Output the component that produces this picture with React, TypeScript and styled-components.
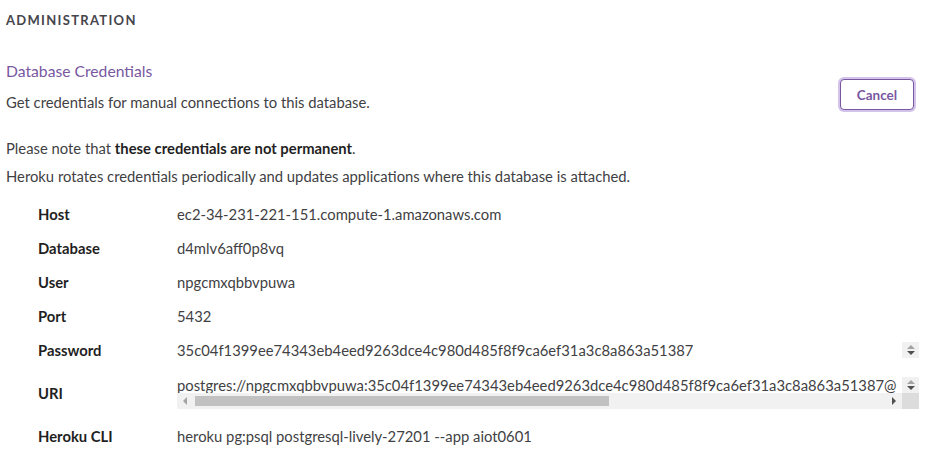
import React from 'react'
import styled, { createGlobalStyle } from 'styled-components'

const GlobalStyle = createGlobalStyle`
  body {
    margin: 0;
    background: #ffffff;
    font-family: 'Lato', 'Open Sans', sans-serif;
    color: #3f3f44;
  }
`

const Page = styled.div`
  padding: 10px 14px 0 6px;
`

const SectionLabel = styled.h2`
  margin: 0;
  font-size: 13px;
  line-height: 20px;
  font-weight: 700;
  letter-spacing: 1.3px;
  color: #45454b;
  text-transform: uppercase;
`

const Header = styled.div`
  display: flex;
  align-items: flex-start;
  justify-content: space-between;
  margin-top: 31px;
`

const Title = styled.h3`
  margin: 0;
  font-size: 15.7px;
  line-height: 20px;
  font-weight: 400;
  color: #79589f;
`

const Text = styled.p<{ $gap?: number }>`
  margin: ${p => p.$gap ?? 0}px 0 0;
  font-size: 14.8px;
  line-height: 20px;
  color: #3f3f44;

  b {
    font-weight: 700;
    color: #1f1f23;
  }
`

const CancelButton = styled.button`
  margin: 18px 5px 0 0;
  width: 74px;
  height: 31px;
  border: 1px solid #79589f;
  border-radius: 4px;
  background: #fff;
  box-shadow: 0 0 0 2px #d2c3ea;
  color: #79589f;
  font-family: inherit;
  font-size: 13.5px;
  font-weight: 700;
  cursor: pointer;
`

const Table = styled.div`
  margin: 11px 0 0 32px;
  display: flex;
  flex-direction: column;
`

const Row = styled.div<{ $pad?: number }>`
  display: grid;
  grid-template-columns: 139px 1fr;
  align-items: center;
  padding: ${p => p.$pad ?? 9}px 0;
  font-size: 14.8px;
  line-height: 16px;
`

const Label = styled.div`
  font-weight: 700;
  color: #1f1f23;
`

const Value = styled.div`
  color: #3f3f44;
  white-space: nowrap;
`

const ScrollBox = styled.div`
  display: grid;
  grid-template-columns: 1fr 17px;
  min-width: 0;
`

const ScrollText = styled.div`
  height: 16px;
  overflow: hidden;
  white-space: nowrap;
  color: #3f3f44;
`

const VBar = styled.div`
  height: 16px;
  background: #f1f1f1;
  display: flex;
  flex-direction: column;
  align-items: center;
  justify-content: center;
  gap: 2px;
`

const Arrow = styled.span<{ $dir: 'up' | 'down' | 'left' | 'right' }>`
  width: 0;
  height: 0;
  border: 4px solid transparent;
  ${p => p.$dir === 'up' && 'border-bottom-color: #a3a3a3; border-top-width: 0;'}
  ${p => p.$dir === 'down' && 'border-top-color: #505050; border-bottom-width: 0;'}
  ${p => p.$dir === 'left' && 'border-right-color: #a3a3a3; border-width: 4px 4px 4px 0;'}
  ${p => p.$dir === 'right' && 'border-left-color: #505050; border-width: 4px 0 4px 4px;'}
`

const HBar = styled.div`
  height: 16px;
  background: #f1f1f1;
  display: flex;
  align-items: center;
  padding: 0 6px;
  gap: 8px;
`

const Thumb = styled.div`
  height: 10px;
  background: #c1c1c1;
`

const Spacer = styled.span`
  flex: 1;
`

const Corner = styled.div`
  height: 16px;
  background: #dcdcdc;
`

const password = '35c04f1399ee74343eb4eed9263dce4c980d485f8f9ca6ef31a3c8a863a51387'

const rows = [
    ['Host', 'ec2-34-231-221-151.compute-1.amazonaws.com'],
    ['Database', 'd4mlv6aff0p8vq'],
    ['User', 'npgcmxqbbvpuwa'],
    ['Port', '5432'],
]

const App = () => {
    return <Page>
        <GlobalStyle />
        <SectionLabel>Administration</SectionLabel>

        <Header>
            <div>
                <Title>Database Credentials</Title>
                <Text $gap={11}>Get credentials for manual connections to this database.</Text>
            </div>
            <CancelButton>Cancel</CancelButton>
        </Header>

        <Text $gap={26}>Please note that <b>these credentials are not permanent</b>.</Text>
        <Text $gap={8}>Heroku rotates credentials periodically and updates applications where this database is attached.</Text>

        <Table>
            {rows.map(([label, value]) => <Row key={label}>
                <Label>{label}</Label>
                <Value>{value}</Value>
            </Row>)}

            <Row>
                <Label>Password</Label>
                <ScrollBox>
                    <ScrollText>{password}</ScrollText>
                    <VBar><Arrow $dir="up" /><Arrow $dir="down" /></VBar>
                </ScrollBox>
            </Row>

            <Row $pad={10}>
                <Label>URI</Label>
                <ScrollBox>
                    <ScrollText>postgres://npgcmxqbbvpuwa:{password}@</ScrollText>
                    <VBar><Arrow $dir="up" /><Arrow $dir="down" /></VBar>
                    <HBar>
                        <Arrow $dir="left" />
                        <Thumb style={{ width: '58%' }} />
                        <Spacer />
                        <Arrow $dir="right" />
                    </HBar>
                    <Corner />
                </ScrollBox>
            </Row>

            <Row>
                <Label>Heroku CLI</Label>
                <Value>heroku pg:psql postgresql-lively-27201 --app aiot0601</Value>
            </Row>
        </Table>
    </Page>
}

export default App
